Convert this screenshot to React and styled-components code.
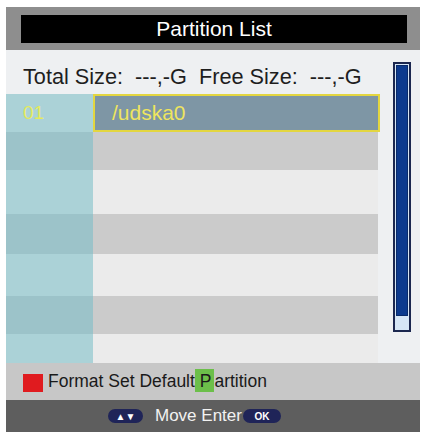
import styled, { createGlobalStyle } from "styled-components";

const GlobalStyle = createGlobalStyle`
  body {
    margin: 0;
    background: #ffffff;
    font-family: "Liberation Sans", Arial, sans-serif;
  }
`;

const rows = [
  { index: "01", name: "/udska0", selected: true, height: 38 },
  { tone: "dark", height: 38 },
  { tone: "light", height: 44 },
  { tone: "dark", height: 40 },
  { tone: "light", height: 42 },
  { tone: "dark", height: 38 },
  { tone: "light", height: 29 },
];

const Frame = styled.div`
  width: 414px;
  margin: 7px 0 0 6px;
  display: flex;
  flex-direction: column;
`;

const Header = styled.div`
  background: #8e8e8e;
  padding: 8px 13px 7px 15px;
`;

const TitleBar = styled.div`
  height: 28px;
  background: #000;
  color: #fff;
  font-size: 21px;
  line-height: 28px;
  text-align: center;
`;

const Content = styled.div`
  display: flex;
  background: #eef0f2;
`;

const Main = styled.div`
  width: 374px;
  display: flex;
  flex-direction: column;
`;

const InfoLine = styled.div`
  height: 44px;
  box-sizing: border-box;
  padding: 14px 0 0 17px;
  font-size: 21.7px;
  color: #1e1e1e;
  white-space: pre;
`;

const Row = styled.div`
  display: grid;
  grid-template-columns: 87px 287px;
  height: ${(p) => p.$h}px;
`;

const IndexCell = styled.div`
  background: ${(p) => (p.$tone === "dark" ? "#9cc3c9" : "#abd2d7")};
  color: #e4ea5c;
  font-size: 19px;
  padding-left: 17px;
  display: flex;
  align-items: center;
`;

const NameCell = styled.div`
  box-sizing: border-box;
  margin-right: 2px;
  background: ${(p) => (p.$tone === "dark" ? "#cbcbcb" : "#ebebeb")};
`;

const SelectedCell = styled.div`
  box-sizing: border-box;
  border: 2px solid #e3d640;
  background: #7e96a5;
  color: #eee55e;
  font-size: 21px;
  padding-left: 17px;
  display: flex;
  align-items: center;
`;

const ScrollColumn = styled.div`
  flex: 1;
  padding: 12px 0 0 13px;
`;

const ScrollTrack = styled.div`
  width: 18px;
  height: 270px;
  box-sizing: border-box;
  border: 2px solid #1b274f;
  background: #d6e6f6;
  padding: 1px;
  display: flex;
  flex-direction: column;
`;

const ScrollThumb = styled.div`
  height: 251px;
  background: #0c3a8e;
  border: 1px solid #082a6a;
  box-sizing: border-box;
`;

const Legend = styled.div`
  height: 37px;
  background: #c7c7c7;
  display: flex;
  align-items: center;
  padding-left: 17px;
  gap: 5px;
  font-size: 17.5px;
  color: #1a1a1a;
`;

const Swatch = styled.span`
  display: inline-block;
  width: 20px;
  height: 18px;
  margin-top: 3px;
  background: ${(p) => p.$color};
`;

const Mark = styled.span`
  background: ${(p) => p.$color};
  white-space: pre;
  padding: 2px 3px 1px 0;
`;

const NavBar = styled.div`
  height: 32px;
  background: #5e5e5e;
  display: flex;
  align-items: center;
  padding-left: 102px;
  color: #f2f2f2;
  font-size: 17px;
`;

const Pill = styled.span`
  display: inline-flex;
  align-items: center;
  justify-content: center;
  width: ${(p) => p.$w}px;
  height: 14px;
  border-radius: 7px;
  background: #1f2458;
  color: #fff;
  font-size: ${(p) => p.$fs}px;
  font-weight: bold;
  margin: ${(p) => p.$m};
`;

export default function App() {
  return (
    <>
      <GlobalStyle />
      <Frame>
        <Header>
          <TitleBar>Partition List</TitleBar>
        </Header>
        <Content>
          <Main>
            <InfoLine>Total Size:  ---,-G  Free Size:  ---,-G</InfoLine>
            {rows.map((r, i) => (
              <Row key={i} $h={r.height}>
                <IndexCell $tone={r.selected ? "light" : r.tone}>{r.index}</IndexCell>
                {r.selected ? (
                  <SelectedCell>{r.name}</SelectedCell>
                ) : (
                  <NameCell $tone={r.tone} />
                )}
              </Row>
            ))}
          </Main>
          <ScrollColumn>
            <ScrollTrack>
              <ScrollThumb />
            </ScrollTrack>
          </ScrollColumn>
        </Content>
        <Legend>
          <Swatch $color="#e01b1f" />
          <span>
            Format Set Default<Mark $color="#6cbf4a"> P</Mark>artition
          </span>
        </Legend>
        <NavBar>
          <Pill $w={35} $fs={10} $m="0 12px 0 0">▲▼</Pill>
          Move Enter
          <Pill $w={38} $fs={10} $m="0 0 0 1px">OK</Pill>
        </NavBar>
      </Frame>
    </>
  );
}
